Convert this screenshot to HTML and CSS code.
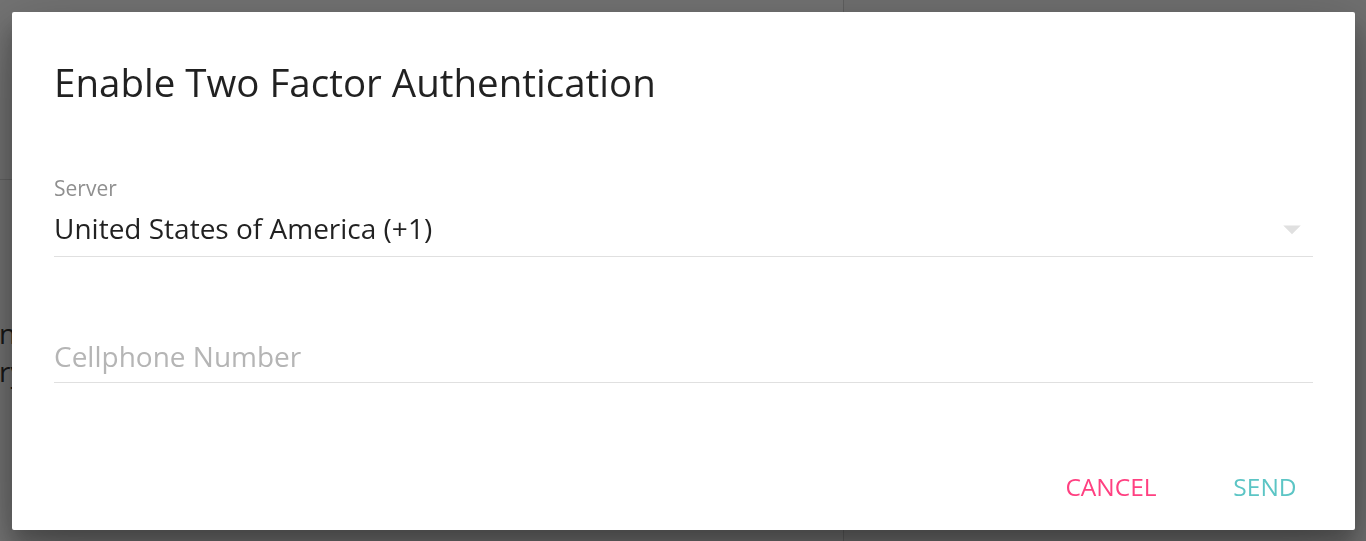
FILE: index.html
```html
<!DOCTYPE html>
<html lang="en">
<head>
<meta charset="utf-8">
<title>Enable Two Factor Authentication</title>
<link rel="stylesheet" href="styles.css">
</head>
<body>
<div class="page">
  <section class="left-pane">
    <header class="left-header"></header>
    <div class="left-text">
      <p>nsure your account</p>
      <p>ry to sign in</p>
    </div>
  </section>
  <section class="right-pane"></section>
</div>

<div class="overlay"></div>

<div class="dialog" role="dialog" aria-labelledby="dlg-title">
  <h3 class="dialog-title" id="dlg-title">Enable Two Factor Authentication</h3>
  <div class="dialog-body">
    <div class="field">
      <label class="field-label">Server</label>
      <div class="select-row">
        <span class="select-value">United States of America (+1)</span>
        <svg class="select-arrow" viewBox="0 0 24 24" width="42" height="42" aria-hidden="true"><path d="M7 10l5 5 5-5z"/></svg>
      </div>
      <div class="underline"></div>
    </div>
    <div class="field">
      <input class="text-input" type="tel" placeholder="Cellphone Number">
      <div class="underline"></div>
    </div>
  </div>
  <div class="dialog-actions">
    <button class="btn btn-cancel" type="button">Cancel</button>
    <button class="btn btn-send" type="button">Send</button>
  </div>
</div>
</body>
</html>
```

FILE: styles.css
```css
html, body {
  margin: 0;
  padding: 0;
  height: 100%;
}

body {
  font-family: "Open Sans", "Noto Sans", "Liberation Sans", sans-serif;
  background: #f6f6f6;
  overflow: hidden;
}

.page {
  display: flex;
  height: 541px;
}

.left-pane {
  width: 843px;
  border-right: 1px solid #cfcfcf;
  background: #f8f8f8;
}

.left-header {
  height: 179px;
  border-bottom: 1px solid #d6d6d6;
}

.left-text {
  padding-top: 134px;
  margin-left: -1px;
  font-size: 28px;
  line-height: 38px;
  color: #333;
}

.left-text p {
  margin: 0;
}

.right-pane {
  flex: 1;
  background: #f1f1f1;
}

.overlay {
  position: fixed;
  inset: 0;
  background: rgba(0, 0, 0, 0.54);
}

.dialog {
  position: fixed;
  left: 12px;
  top: 12px;
  width: 1343px;
  height: 518px;
  background: #fff;
  border-radius: 2px;
  box-shadow: 0 19px 60px rgba(0, 0, 0, 0.3), 0 15px 20px rgba(0, 0, 0, 0.22);
  display: flex;
  flex-direction: column;
  box-sizing: border-box;
}

.dialog-title {
  margin: 0;
  padding: 42px 42px 35px;
  font-size: 38.5px;
  line-height: 56px;
  font-weight: 400;
  color: rgba(0, 0, 0, 0.87);
}

.dialog-body {
  padding: 0 42px 42px;
}

.field {
  height: 126px;
  display: flex;
  flex-direction: column;
  justify-content: flex-end;
}

.field-label {
  font-size: 21px;
  line-height: 29px;
  color: #8f8f8f;
}

.select-row {
  display: flex;
  justify-content: space-between;
  align-items: flex-start;
  height: 42px;
  margin-top: 4px;
  margin-bottom: 7px;
}

.select-value {
  font-size: 28px;
  line-height: 42px;
  color: rgba(0, 0, 0, 0.87);
}

.select-arrow {
  fill: #e0e0e0;
  margin-top: 1px;
  flex: none;
}

.text-input {
  border: none;
  outline: none;
  padding: 0;
  margin: 0 0 5px;
  height: 42px;
  font-family: inherit;
  font-size: 28px;
  line-height: 42px;
  color: rgba(0, 0, 0, 0.87);
  background: transparent;
}

.text-input::placeholder {
  color: #b5b5b5;
  opacity: 1;
}

.underline {
  height: 1px;
  background: #e0e0e0;
  margin-bottom: 14px;
}

.dialog-actions {
  margin-top: auto;
  display: flex;
  justify-content: flex-end;
  padding: 16px 13px 12px;
}

.btn {
  min-width: 154px;
  height: 63px;
  padding: 0 28px;
  border: none;
  background: transparent;
  font-family: inherit;
  font-size: 24.5px;
  line-height: 63px;
  text-transform: uppercase;
  cursor: pointer;
}

.btn-cancel {
  color: #ff4081;
}

.btn-send {
  color: #5cc5c5;
}
```
